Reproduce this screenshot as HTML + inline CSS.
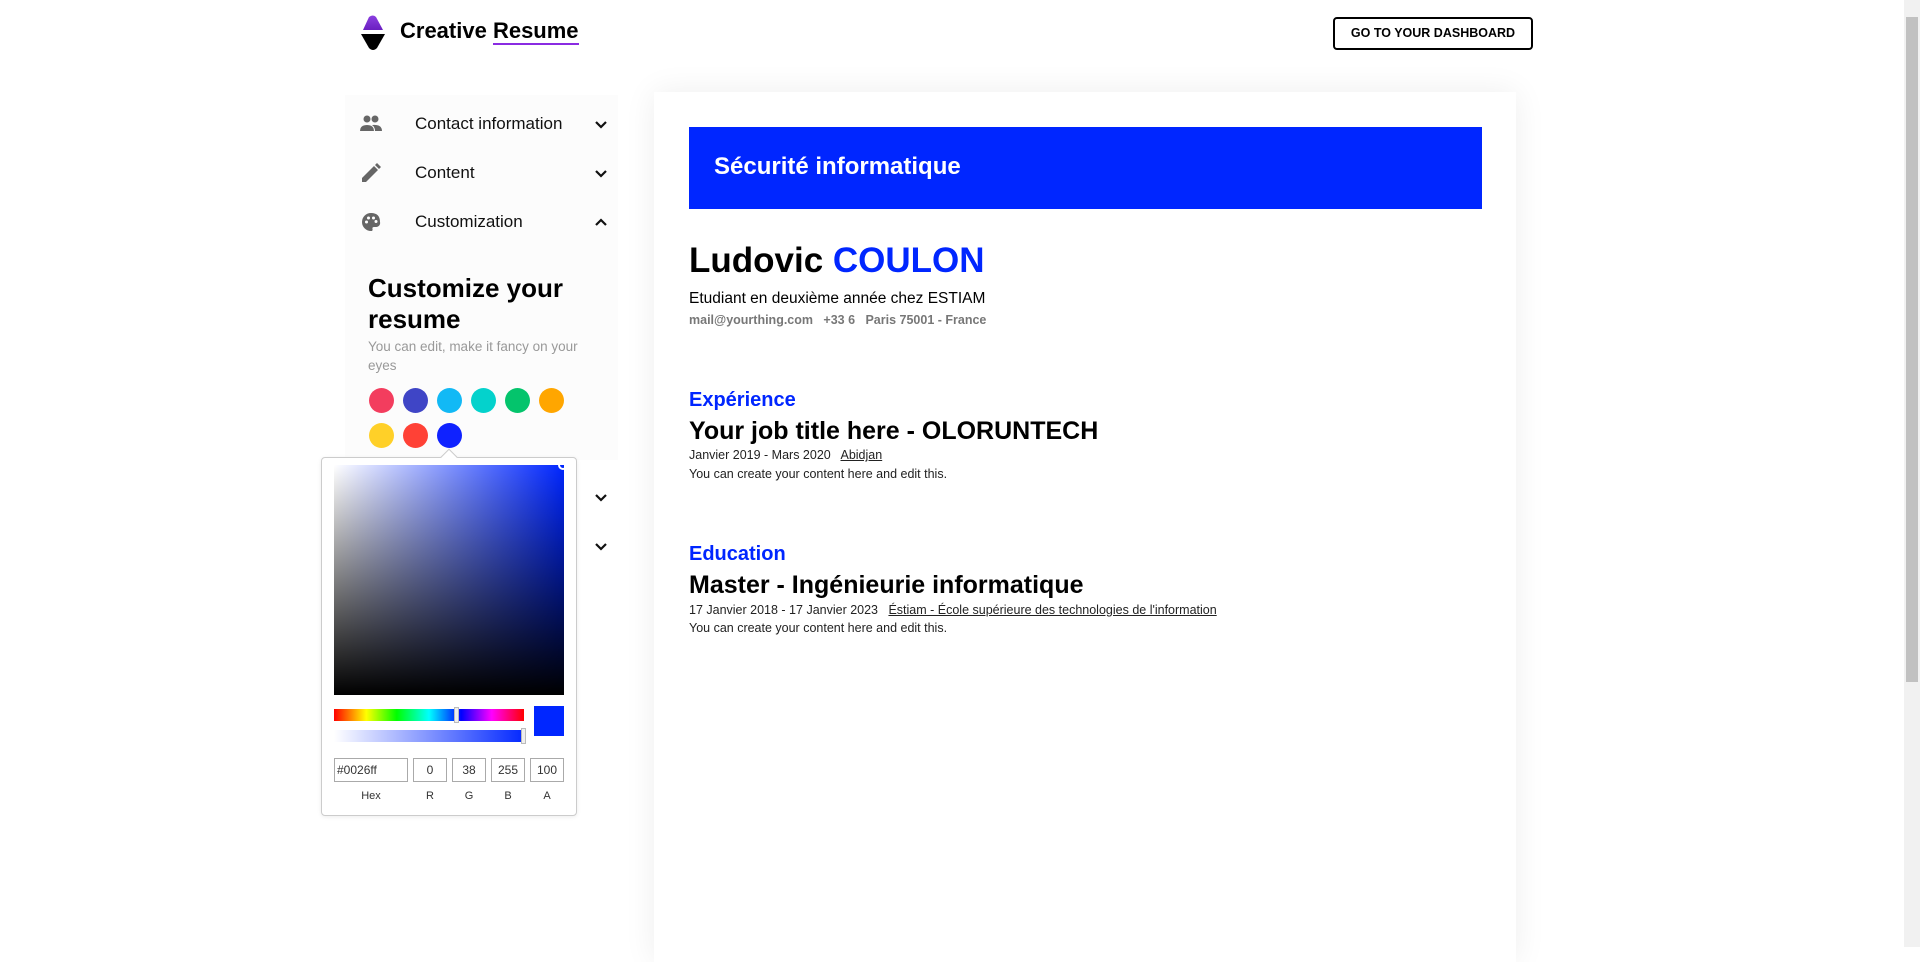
<!DOCTYPE html>
<html><head><meta charset="utf-8"><style>
*{box-sizing:border-box;margin:0;padding:0}
body{width:1920px;height:947px;overflow:hidden;background:#fff;font-family:"Liberation Sans",sans-serif;color:#000;position:relative}
.abs{position:absolute}
.sb{position:absolute;right:0;top:0;width:16px;height:947px;background:#f1f1f1}
.sb div{position:absolute;left:2px;top:17px;width:12px;height:665px;background:#c1c1c1}
.nav{left:345px;top:95px;width:273px;height:155px;background:#fcfcfc}
.item{position:absolute;left:415px;font-size:17px;color:#111}
.chev{position:absolute;left:594px;width:14px;height:10px}
.dot{position:absolute;width:25px;height:25px;border-radius:50%}
.card{left:654px;top:92px;width:862px;height:870px;background:#fff;box-shadow:0 0 30px rgba(0,0,0,.07)}
.r{position:absolute;left:689px;white-space:nowrap}
.inp{position:absolute;top:758px;height:24px;border:1px solid #aaa;font-size:12px;color:#333;text-align:center;line-height:22px}
.lab{position:absolute;top:790px;font-size:11px;color:#333;text-align:center}
</style></head><body>
<svg class="abs" style="left:360px;top:15px" width="26" height="37" viewBox="0 0 26 37"><defs><linearGradient id="g" x1="0" y1="0" x2="0" y2="1"><stop offset="0" stop-color="#8b3fe0"/><stop offset="1" stop-color="#6a1fc0"/></linearGradient></defs><path d="M9 2 Q13 -1 16 2 L23 15 L3 15 Z" fill="url(#g)"/><path d="M1 19 L25 19 L17 33 Q13 37 9 33 Z" fill="#000"/></svg>
<div class="abs" style="left:400px;top:18px;font-size:22px;font-weight:bold">Creative <span style="border-bottom:2px solid #8a2be2">Resume</span></div>
<div class="abs" style="left:1333px;top:17px;width:200px;height:33px;border:2px solid #000;border-radius:4px;font-size:12.5px;font-weight:bold;text-align:center;line-height:29px">GO TO YOUR DASHBOARD</div>
<div class="sb"><div></div></div>

<div class="abs nav"></div>
<div class="abs" style="left:345px;top:250px;width:273px;height:210px;background:#fcfcfc"></div>
<svg class="abs" style="left:359px;top:114px" width="24" height="20" viewBox="0 0 24 20"><circle cx="8" cy="5" r="3.5" fill="#666"/><circle cx="16" cy="5" r="3.5" fill="#666"/><path d="M1 17 Q1 11 8 11 Q15 11 15 17Z M13 11 Q23 10 23 17 L16 17 Q16 13 13 11Z" fill="#666"/></svg>
<svg class="abs" style="left:361px;top:163px" width="20" height="20" viewBox="0 0 20 20"><path d="M1 15 L13 3 L17 7 L5 19 L1 19Z M14 2 L16 0 L20 4 L18 6Z" fill="#666"/></svg>
<svg class="abs" style="left:361px;top:212px" width="20" height="20" viewBox="0 0 20 20"><path d="M10 1 A9 9 0 0 0 10 19 Q12 19 11.5 17 Q11 15 13 15 L15 15 A4 4 0 0 0 19 10 Q19 1 10 1Z" fill="#666"/><circle cx="5.5" cy="10" r="1.5" fill="#fff"/><circle cx="7.5" cy="6" r="1.5" fill="#fff"/><circle cx="12.5" cy="6" r="1.5" fill="#fff"/><circle cx="15" cy="9.5" r="1.5" fill="#fff"/></svg>
<div class="item" style="top:114px">Contact information</div>
<div class="item" style="top:163px">Content</div>
<div class="item" style="top:212px">Customization</div>
<svg class="chev" style="top:120px" viewBox="0 0 14 10"><path d="M2 2 L7 7 L12 2" stroke="#111" stroke-width="2.2" fill="none"/></svg>
<svg class="chev" style="top:169px" viewBox="0 0 14 10"><path d="M2 2 L7 7 L12 2" stroke="#111" stroke-width="2.2" fill="none"/></svg>
<svg class="chev" style="top:217px" viewBox="0 0 14 10"><path d="M2 8 L7 3 L12 8" stroke="#111" stroke-width="2.2" fill="none"/></svg>
<svg class="chev" style="top:493px" viewBox="0 0 14 10"><path d="M2 2 L7 7 L12 2" stroke="#111" stroke-width="2.2" fill="none"/></svg>
<svg class="chev" style="top:542px" viewBox="0 0 14 10"><path d="M2 2 L7 7 L12 2" stroke="#111" stroke-width="2.2" fill="none"/></svg>
<div class="abs" style="left:368px;top:273px;font-size:26px;font-weight:bold;line-height:31px">Customize your<br>resume</div>
<div class="abs" style="left:368px;top:337px;font-size:13.5px;color:#999;line-height:19px;width:240px">You can edit, make it fancy on your eyes</div>
<div class="dot" style="left:369px;top:388px;background:#f33d5e"></div>
<div class="dot" style="left:403px;top:388px;background:#3f45c6"></div>
<div class="dot" style="left:437px;top:388px;background:#12b9f5"></div>
<div class="dot" style="left:471px;top:388px;background:#04d2cc"></div>
<div class="dot" style="left:505px;top:388px;background:#04c46c"></div>
<div class="dot" style="left:539px;top:388px;background:#ffa600"></div>
<div class="dot" style="left:369px;top:423px;background:#ffd028"></div>
<div class="dot" style="left:403px;top:423px;background:#ff4136"></div>
<div class="dot" style="left:437px;top:423px;background:#0f22ff"></div>

<div class="abs" style="left:321px;top:457px;width:256px;height:359px;background:#fff;border:1px solid #ccc;border-radius:4px;box-shadow:0 1px 4px rgba(0,0,0,.08)"></div>
<div class="abs" style="left:443px;top:451px;width:12px;height:12px;background:#fff;border-left:1px solid #ccc;border-top:1px solid #ccc;transform:rotate(45deg)"></div>
<div class="abs" style="left:334px;top:465px;width:230px;height:230px;background:linear-gradient(to top,#000,rgba(0,0,0,0)),linear-gradient(to right,#fff,#0026ff)"></div>
<div class="abs" style="left:558px;top:460px;width:10px;height:10px;border:2px solid #fff;border-radius:50%"></div>
<div class="abs" style="left:334px;top:709px;width:190px;height:12px;background:linear-gradient(to right,#f00,#ff0 17%,#0f0 33%,#0ff 50%,#00f 67%,#f0f 83%,#f00)"></div>
<div class="abs" style="left:454px;top:707px;width:5px;height:16px;background:#eee;border:1px solid #bbb"></div>
<div class="abs" style="left:334px;top:730px;width:192px;height:12px;background:linear-gradient(to right,rgba(0,38,255,0),#0026ff)"></div>
<div class="abs" style="left:521px;top:728px;width:5px;height:16px;background:#eee;border:1px solid #bbb"></div>
<div class="abs" style="left:534px;top:706px;width:30px;height:30px;background:#0026ff"></div>
<div class="inp" style="left:334px;width:74px;text-align:left;padding-left:2px">#0026ff</div>
<div class="inp" style="left:413px;width:34px">0</div>
<div class="inp" style="left:452px;width:34px">38</div>
<div class="inp" style="left:491px;width:34px">255</div>
<div class="inp" style="left:530px;width:34px">100</div>
<div class="lab" style="left:334px;width:74px">Hex</div>
<div class="lab" style="left:413px;width:34px">R</div>
<div class="lab" style="left:452px;width:34px">G</div>
<div class="lab" style="left:491px;width:34px">B</div>
<div class="lab" style="left:530px;width:34px">A</div>

<div class="abs card"></div>
<div class="abs" style="left:689px;top:127px;width:793px;height:82px;background:#0026ff"></div>
<div class="r" style="left:714px;top:153px;font-size:24px;font-weight:bold;color:#fff">Sécurité informatique</div>
<div class="r" style="top:241px;font-size:35px;font-weight:bold">Ludovic <span style="color:#0026ff">COULON</span></div>
<div class="r" style="top:290px;font-size:15.5px">Etudiant en deuxième année chez ESTIAM</div>
<div class="r" style="top:313px;font-size:12.5px;font-weight:bold;color:#777">mail@yourthing.com &nbsp; +33 6 &nbsp; Paris 75001 - France</div>
<div class="r" style="top:389px;font-size:20px;font-weight:bold;color:#0026ff">Expérience</div>
<div class="r" style="top:417px;font-size:25px;font-weight:bold">Your job title here - OLORUNTECH</div>
<div class="r" style="top:448px;font-size:12.5px;color:#222">Janvier 2019 - Mars 2020 &nbsp; <u>Abidjan</u></div>
<div class="r" style="top:467px;font-size:12.5px;color:#222">You can create your content here and edit this.</div>
<div class="r" style="top:543px;font-size:20px;font-weight:bold;color:#0026ff">Education</div>
<div class="r" style="top:571px;font-size:25px;font-weight:bold">Master - Ingénieurie informatique</div>
<div class="r" style="top:603px;font-size:12.5px;color:#222">17 Janvier 2018 - 17 Janvier 2023 &nbsp; <u>Éstiam - École supérieure des technologies de l'information</u></div>
<div class="r" style="top:621px;font-size:12.5px;color:#222">You can create your content here and edit this.</div>
</body></html>
